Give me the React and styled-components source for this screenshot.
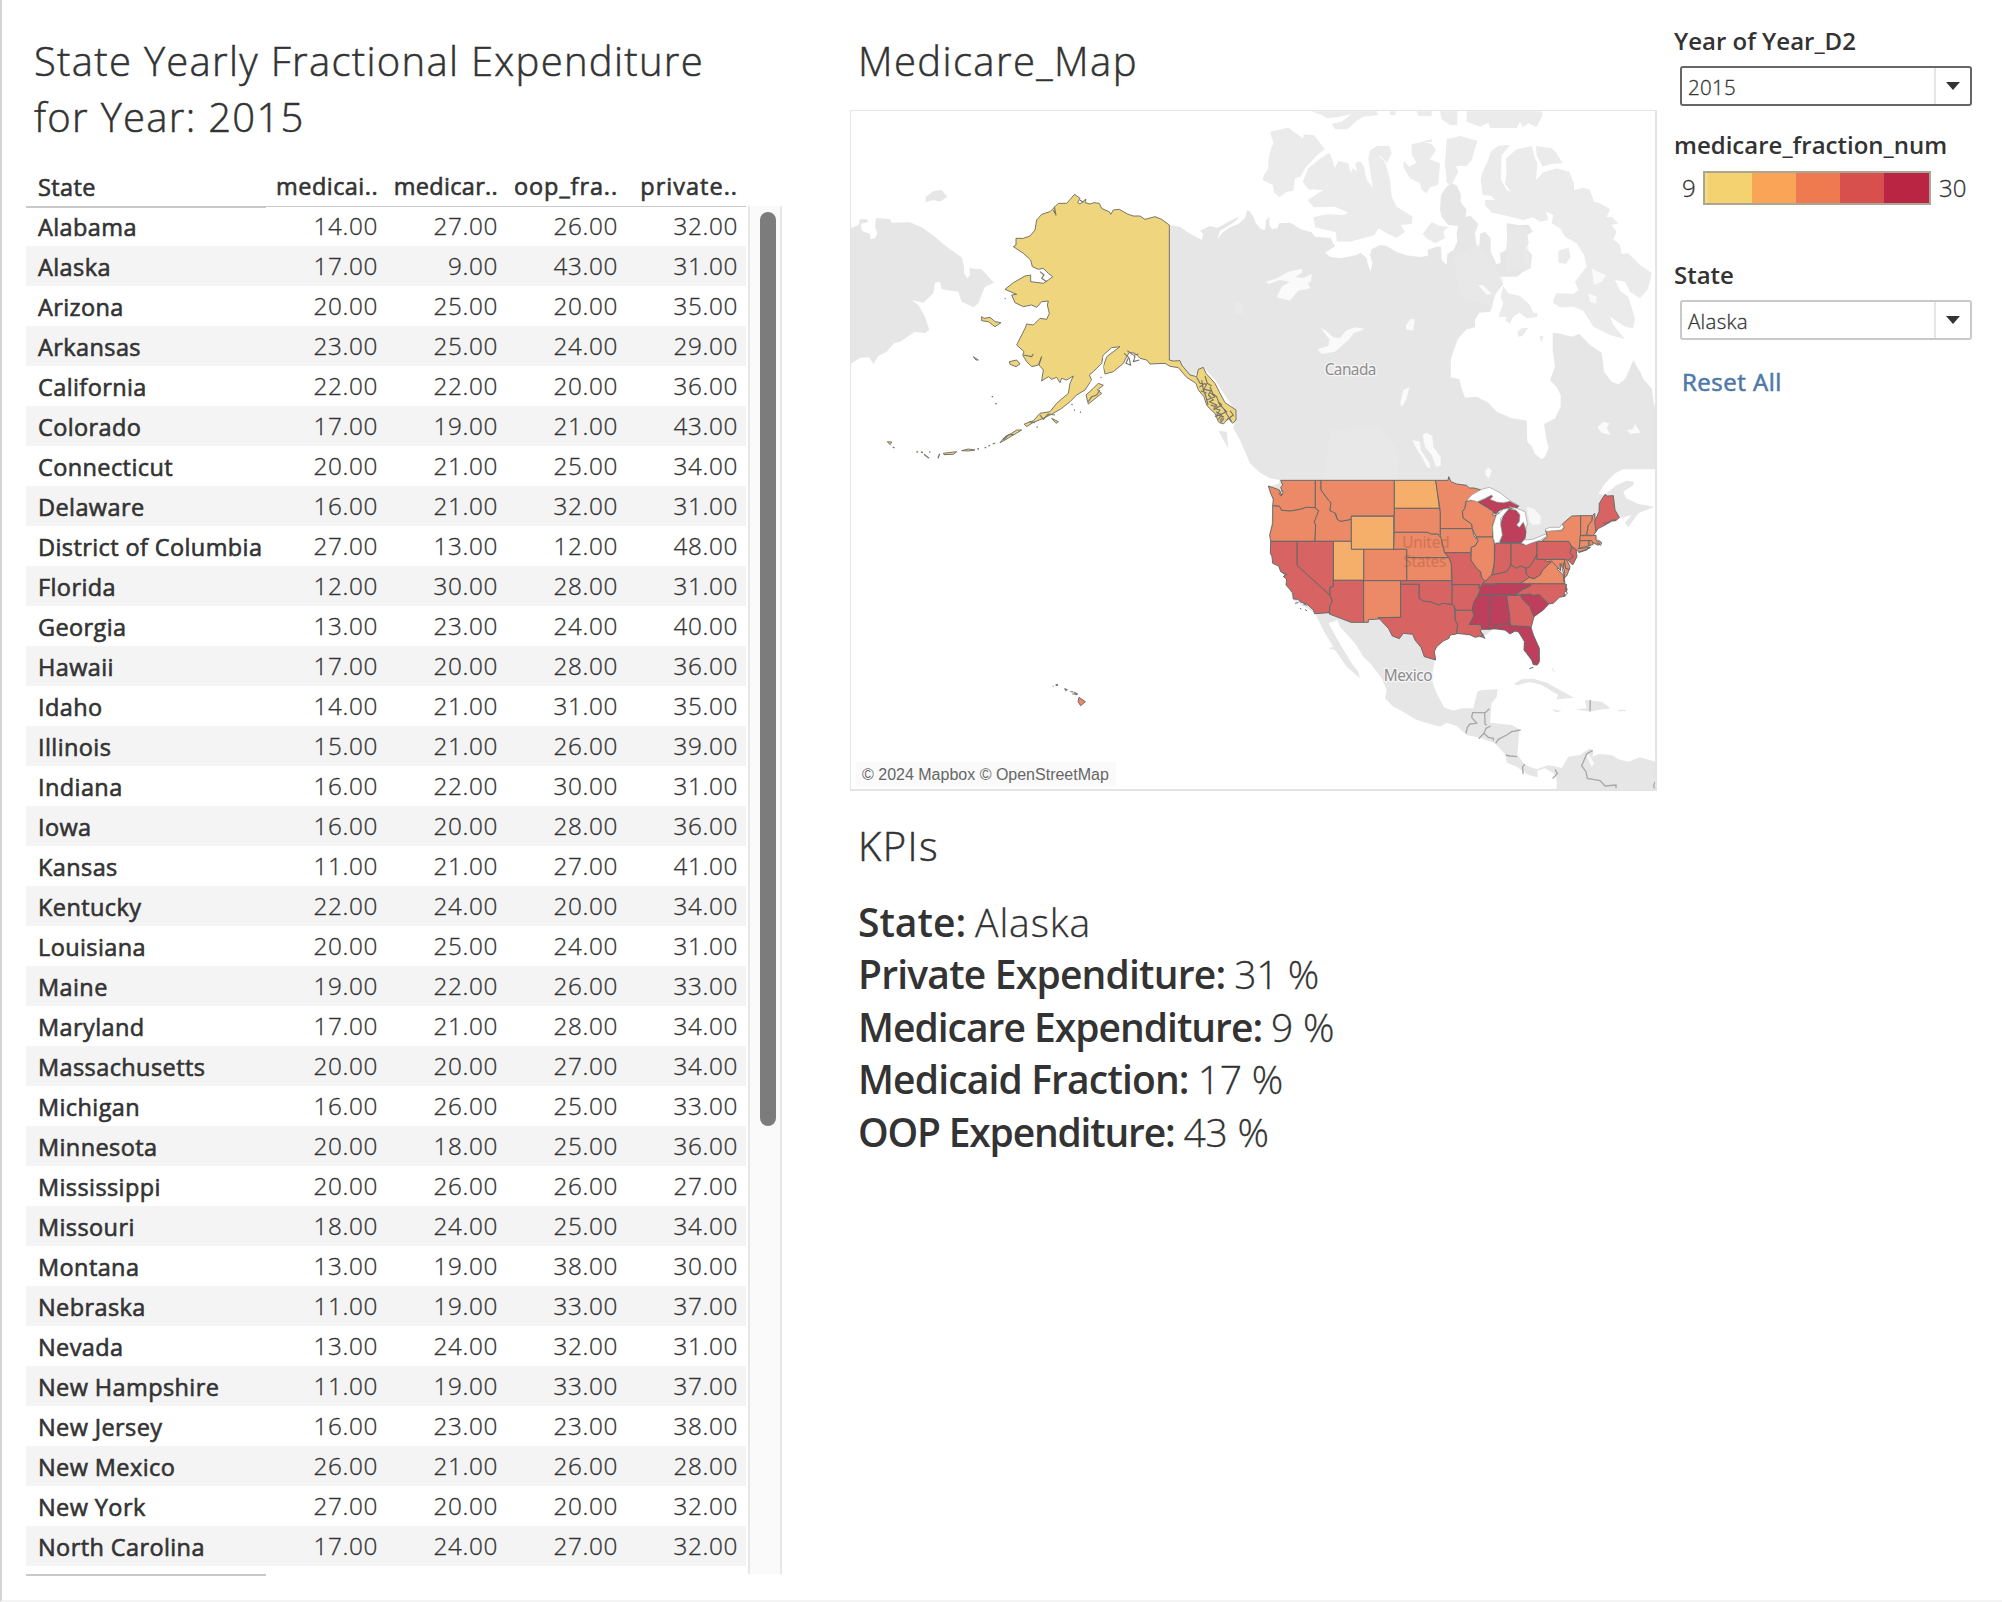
import React from "react";
import styled, { createGlobalStyle } from "styled-components";

const GlobalStyle = createGlobalStyle`
  * { box-sizing: border-box; }
  body { margin: 0; background: #fff; color: #333; font-family: "Open Sans", "Noto Sans", sans-serif; }
`;

const Dashboard = styled.main`
  display: flex;
  width: 2002px;
  height: 1602px;
  overflow: hidden;
  border-left: 2px solid #d4d4d4;
  border-bottom: 2px solid #f4f4f4;
`;

const TablePanel = styled.section`
  width: 848px;
  padding: 33px 0 0 24px;
`;

const SheetTitle = styled.h1`
  margin: 0;
  padding-left: ${(p) => p.$inset || 0}px;
  font-size: 40px;
  line-height: 56px;
  font-weight: 300;
  letter-spacing: ${(p) => p.$spacing || 0}px;
  white-space: nowrap;
  -webkit-text-stroke: 0.5px #333;
`;

const TableBody = styled.div`
  display: flex;
  align-items: flex-start;
  margin-top: 21px;
`;

const Table = styled.div`
  width: 720px;
`;

const Row = styled.div`
  display: grid;
  grid-template-columns: 240px repeat(4, 120px);
  height: 40px;
  line-height: 40px;
  font-size: 24.3px;
  background: ${(p) => (p.$striped ? "#f4f4f4" : "transparent")};
`;

const StateCell = styled.div`
  padding: 1px 0 0 12px;
  font-size: 23.5px;
  font-weight: 400;
  white-space: nowrap;
  letter-spacing: 0.4px;
  -webkit-text-stroke: 0.6px #333;
`;

const ValueCell = styled.div`
  padding-right: 8px;
  text-align: right;
  font-weight: 300;
  letter-spacing: 0.65px;
  -webkit-text-stroke: 0.3px #333;
`;

const ColumnHead = styled.div`
  padding-right: 8px;
  text-align: right;
  font-size: 23.5px;
  font-weight: 400;
  white-space: nowrap;
  letter-spacing: ${(p) => p.$spacing}px;
  -webkit-text-stroke: 0.6px #333;
`;

const HeadRule = styled.div`
  display: grid;
  grid-template-columns: 240px 480px;
  align-items: start;
  height: 2px;
  margin-bottom: -2px;
`;

const Rule = styled.div`
  width: ${(p) => p.$width}px;
  height: ${(p) => p.$thick}px;
  background: #c9c9c9;
`;

const Rows = styled.div`
  padding-bottom: 8px;
`;

const ScrollTrack = styled.div`
  width: 34px;
  height: 1368px;
  margin: 40px 0 0 2px;
  padding: 6px 0 0 10px;
  border: solid #e7e7e7;
  border-width: 0 2px;
  background: #fafafa;
`;

const ScrollThumb = styled.div`
  width: 16px;
  height: 914px;
  border-radius: 8px;
  background: #7c7c7c;
`;

const MapColumn = styled.section`
  width: 807px;
  padding-top: 33px;
`;

const MapFrame = styled.div`
  display: grid;
  height: 681px;
  margin: 21px 0 27px;
  border: solid #e4e4e4;
  border-width: 1px 2px 2px 1px;
`;

const MapCanvas = styled.svg`
  grid-area: 1 / 1;
  display: block;
  width: 804px;
  height: 678px;
`;

const Attribution = styled.div`
  grid-area: 1 / 1;
  align-self: end;
  justify-self: start;
  width: 260px;
  height: 24px;
  margin: 0 0 3px 5px;
  padding-left: 6px;
  background: #fafafa;
  color: #666;
  font: 16px/26px "Liberation Sans", Arial, sans-serif;
  white-space: nowrap;
`;

const KpiList = styled.div`
  padding: 22px 0 0 8px;
`;

const Kpi = styled.div`
  height: 52.4px;
  line-height: 52.4px;
  font-size: 39px;
  font-weight: 300;
  white-space: nowrap;
`;

const KpiName = styled.b`
  font-weight: 600;
  letter-spacing: ${(p) => p.$spacing}px;
`;

const KpiValue = styled.span`
  margin-left: 9px;
  letter-spacing: ${(p) => p.$spacing}px;
  -webkit-text-stroke: 0.3px #333;
`;

const Sidebar = styled.aside`
  flex: 1;
  padding: 25px 28px 0 16px;
`;

const Field = styled.div`
  height: ${(p) => p.$height}px;
`;

const Label = styled.div`
  height: 32px;
  line-height: 32px;
  padding-left: 1px;
  font-size: 24px;
  font-weight: 600;
  white-space: nowrap;
`;

const Select = styled.div`
  display: flex;
  width: 292px;
  height: 40px;
  margin: 9px 0 0 7px;
  border: 2px solid ${(p) => (p.$active ? "#666" : "#c9c9c9")};
  border-radius: 3px;
  background: #fff;
`;

const SelectValue = styled.div`
  flex: 1;
  padding-left: 6px;
  border-right: 2px solid #e5e5e5;
  font-size: 20.5px;
  font-weight: 300;
  line-height: 38px;
  letter-spacing: 0.3px;
  -webkit-text-stroke: 0.3px #333;
`;

const SelectArrow = styled.div`
  display: grid;
  place-items: center;
  width: 34px;
  svg { display: block; width: 14px; height: 8px; }
`;

const Legend = styled.div`
  display: flex;
  align-items: center;
  height: 34px;
  margin: 10px 0 0 9px;
  font-size: 24px;
  font-weight: 300;
  -webkit-text-stroke: 0.3px #333;
`;

const LegendEnd = styled.span`
  width: ${(p) => p.$width}px;
  line-height: 36px;
  padding-left: ${(p) => p.$pad || 0}px;
`;

const LegendBar = styled.div`
  display: flex;
  width: 228px;
  height: 34px;
  border: 2px solid #a9a696;
`;

const Swatch = styled.div`
  width: ${(p) => p.$width}px;
  background: ${(p) => p.$color};
`;

const ResetLink = styled.a`
  display: block;
  padding-left: 9px;
  line-height: 32px;
  font-size: 24px;
  font-weight: 400;
  letter-spacing: 0.5px;
  color: #4e79a7;
  -webkit-text-stroke: 0.6px #4e79a7;
`;

const DATA = `Alabama 14 27 26 32
Alaska 17 9 43 31
Arizona 20 25 20 35
Arkansas 23 25 24 29
California 22 22 20 36
Colorado 17 19 21 43
Connecticut 20 21 25 34
Delaware 16 21 32 31
District of Columbia 27 13 12 48
Florida 12 30 28 31
Georgia 13 23 24 40
Hawaii 17 20 28 36
Idaho 14 21 31 35
Illinois 15 21 26 39
Indiana 16 22 30 31
Iowa 16 20 28 36
Kansas 11 21 27 41
Kentucky 22 24 20 34
Louisiana 20 25 24 31
Maine 19 22 26 33
Maryland 17 21 28 34
Massachusetts 20 20 27 34
Michigan 16 26 25 33
Minnesota 20 18 25 36
Mississippi 20 26 26 27
Missouri 18 24 25 34
Montana 13 19 38 30
Nebraska 11 19 33 37
Nevada 13 24 32 31
New Hampshire 11 19 33 37
New Jersey 16 23 23 38
New Mexico 26 21 26 28
New York 27 20 20 32
North Carolina 17 24 27 32`
  .split("\n")
  .map((line) => {
    const parts = line.split(" ");
    return { state: parts.slice(0, -4).join(" "), values: parts.slice(-4) };
  });

const HEADS = [
  ["medicai..", 0.45],
  ["medicar..", 0.3],
  ["oop_fra..", 0.9],
  ["private..", 1],
];

const KPIS = [
  ["State:", "Alaska", 0, 0.9],
  ["Private Expenditure:", "31 %", -0.8, -0.4],
  ["Medicare Expenditure:", "9 %", -1, -0.2],
  ["Medicaid Fraction:", "17 %", -0.85, -0.2],
  ["OOP Expenditure:", "43 %", -1.2, -0.2],
];

const FILL = { y: "#f0d57f", l: "#f6af6b", o: "#ec8966", r: "#d76463", d: "#be3f5c" };

const MAINLAND =
  "-212,375 -180,380 -155,398 -115,420 -110,402 -120,392 -90,378 -70,383 -50,375 -35,365 -5,350 -8,358 -25,372 -60,392 -68,418 -55,400 -30,382 -5,372 15,355 22,330 30,335 40,350 47,368 60,385 70,390 76,388 78,360 88,350 88,375 96,388 112,385 118,370 150,368 162,374 182,388 215,397 225,410 272,414 280,430 286,438 255,458 270,470 300,475 350,465 362,458 380,475 384,495 392,515 397,490 390,465 395,448 420,435 440,438 470,456 500,466 540,471 565,467 562,450 590,440 603,440 605,480 620,494 622,462 640,450 652,425 650,398 655,378 625,375 605,350 600,330 603,285 618,262 632,250 650,256 662,282 662,305 680,330 676,350 692,348 715,372 705,400 710,440 718,438 720,402 735,395 752,415 752,455 770,493 782,488 780,460 798,450 802,420 800,370 840,376 866,374 878,395 862,405 866,430 858,445 876,465 872,505 850,515 830,530 790,530 778,532 790,552 765,582 755,625 750,636 718,638 705,660 705,682 680,688 655,715 645,740 633,775 632,832 658,838 664,862 675,893 710,890 745,908 770,935 815,955 860,962 862,1025 875,1038 885,1062 905,1078 915,1070 926,1045 918,1010 912,972 945,955 962,920 962,885 950,862 930,840 945,800 938,750 938,698 955,700 995,710 1018,702 1050,735 1085,758 1092,815 1115,845 1135,853 1155,838 1168,810 1180,780 1200,815 1212,840 1235,865 1240,900 1246,925 1246,1108 1150,1108 1125,1120 1095,1150 1075,1182 1095,1184 1130,1155 1160,1142 1182,1145 1180,1155 1150,1175 1158,1195 1195,1212 1243,1220 1195,1240 1165,1282 1155,1268 1175,1245 1140,1255 1065,1295 1080,1330 1010,1355 975,1420 980,1475 880,1550 875,1580 900,1660 885,1695 850,1650 845,1600 760,1588 725,1615 640,1600 585,1630 583,1688 575,1730 580,1755 590,1780 612,1822 640,1832 665,1825 700,1825 712,1775 725,1770 773,1768 770,1790 755,1810 750,1868 815,1875 838,1888 835,1930 832,1965 855,1995 890,2008 925,1995 950,2000 965,2005 985,1970 1020,1965 1050,1945 1060,1955 1058,1970 1075,1962 1115,1965 1135,1978 1165,1985 1200,1972 1246,1985 1246,2067 950,2067 950,2035 940,2020 915,2005 892,2012 893,2032 865,2025 830,2000 800,1988 797,1965 765,1930 720,1913 680,1905 650,1878 620,1868 600,1880 530,1860 480,1830 460,1820 435,1795 440,1770 425,1735 395,1695 370,1670 345,1630 300,1580 292,1560 265,1570 285,1605 305,1640 335,1690 355,1715 360,1735 320,1700 285,1650 265,1645 280,1640 255,1600 230,1550 225,1540 160,1500 135,1430 95,1360 90,1300 100,1210 85,1160 118,1150 118,1140 90,1135 60,1118 30,1090 0,1020 -20,985 -10,940 -75,840 -110,800 -140,830 -212,780";

const ARCTIC = [
  "90,95 145,83 165,98 190,115 190,103 222,106 255,148 232,165 195,205 182,230 165,235 160,272 140,275 118,292 103,278 98,255 68,240 72,225 85,205 85,180 92,150 100,130",
  "268,158 275,175 285,205 295,182 325,190 332,220 338,205 352,215 345,190 360,183 372,200 380,240 398,262 385,175 390,150 405,160 430,180 438,195 450,240 455,290 470,320 518,350 515,372 482,375 495,395 470,414 440,400 415,385 403,405 380,412 330,425 290,425 288,397 225,382 220,352 260,343 310,345 325,338 285,320 222,322 203,300 250,270 205,268 188,245 205,205 235,180",
  "392,150 412,138 448,138 455,160 440,190 425,170 405,165",
  "515,133 550,125 575,132 588,150 570,178 600,190 595,255 570,262 560,280 545,270 540,250 510,235 490,200 492,182 508,200 530,188 515,165",
  "620,118 660,108 712,122 695,180 680,197 648,198 655,215 632,260 620,245 615,190",
  "745,180 752,155 775,137 810,135 785,165 783,240 800,270 814,275 795,252 800,220 798,175 830,148 875,138 885,175 892,190 888,240 910,217 950,205 988,215 1002,250 1002,270 1030,263 1050,270 1062,305 1080,310 1110,328 1100,352 1115,350 1135,370 1115,375 1130,395 1120,418 1140,435 1145,462 1165,460 1200,495 1235,518 1230,545 1222,570 1200,595 1170,575 1155,545 1125,540 1140,572 1165,590 1185,655 1180,685 1155,680 1110,650 1120,675 1155,718 1110,705 1060,680 1030,632 1000,620 960,622 938,608 948,580 1000,582 1015,570 1005,545 1040,500 1032,465 1010,430 975,410 960,385 935,370 940,345 918,335 925,360 900,365 878,352 850,360 790,345 755,338 735,315 735,300 765,300 755,288 728,285 722,240 728,215",
  "888,138 935,145 950,160 968,190 932,192 908,200 890,165",
  "790,558 805,580 840,588 870,615 880,638 893,640 890,652 860,655 838,638 820,650 810,670 795,662 800,652 775,650 790,610 782,590",
  "955,452 985,443 992,470 978,492 955,488",
  "832,695 845,685 865,683 848,708 835,710",
  "898,708 910,708 905,730",
  "548,402 575,366 600,378 625,380 610,395 615,415 585,430 560,415",
  "215,34 410,34 415,45 370,50 350,62 322,88 285,88 275,72 305,65 335,42 300,50 260,55 245,45",
  "680,34 905,34 908,45 890,80 865,70 848,82 840,65 830,84 750,84 745,68 720,80 680,65",
  "600,34 652,34 652,75 630,75 605,58",
  "530,34 575,34 575,48 535,48",
  "450,34 468,34 465,46 450,44",
  "545,125 575,117 575,126",
];

const SIBERIA = [
  "-1168,385 -1145,375 -1140,358 -1120,357 -1115,365 -1137,372 -1135,392 -1110,402 -1108,418 -1095,415 -1088,400 -1095,378 -1092,354 -1050,358 -1045,368 -990,367 -950,385 -910,415 -880,440 -835,472 -828,500 -828,520 -818,535 -810,525 -812,505 -775,508 -738,548 -765,560 -778,592 -785,610 -800,622 -835,605 -845,575 -895,568 -900,545 -915,548 -920,580 -950,608 -985,600 -965,615 -945,650 -932,690 -945,700 -975,695 -1020,725 -1038,730 -1060,755 -1085,768 -1100,792 -1112,772 -1140,773 -1168,792",
  "-943,292 -920,273 -895,270 -878,290 -900,305 -920,300 -943,307",
];

const CARIBBEAN = [
  "822,1752 845,1738 880,1736 920,1748 960,1770 1002,1793 948,1798 955,1785 930,1770 905,1755 870,1746 830,1756",
  "1035,1800 1085,1805 1112,1825 1075,1830 1050,1835 1005,1828 1040,1825",
  "935,1828 965,1832 950,1837",
  "1135,1829 1158,1830 1155,1834 1135,1834",
  "935,1700 945,1716 938,1712",
  "-65,992 -40,995 -35,1045 -50,1020",
];

const LAKES = [
  "78,545 110,535 145,515 185,506 188,516 165,532 190,534 215,522 213,545 203,550 212,565 175,572 150,602 110,592 125,560 150,545 120,540 85,552",
  "242,685 258,692 280,712 300,714 318,692 345,682 374,686 362,692 342,698 328,718 305,738 285,755 245,762 232,748 265,738 268,718",
  "548,1005 560,998 577,1008 580,1040 602,1072 602,1098 588,1100 575,1065 555,1042",
  "517,1020 540,1025 542,1050 568,1088 572,1105 560,1100 545,1070 530,1048",
  "498,675 512,657 524,658 520,692 498,688",
  "480,912 490,870 508,862 500,895 487,920",
  "715,556 728,555 756,582 740,584",
  "1072,982 1090,965 1108,970 1100,985 1112,1005 1085,998",
  "1162,990 1178,988 1185,972 1202,998 1170,1002",
  "735,1112 745,1102 755,1112 748,1135 738,1128",
  "1055,505 1080,518 1098,525 1085,545 1062,555",
  "1045,580 1070,590 1068,612 1050,605",
  "1040,1968 1045,1962 1063,1990 1055,2002",
];

const STATES = [
  ["o", "92,61 196,61 196,143 170,142 150,148 122,153 112,152 95,151 88,139 68,137 70,118 62,100 55,78 78,86 88,90 94,104 99,98 95,90 92,82 98,75"],
  ["o", "68,137 88,139 95,151 122,153 150,148 170,142 194,143 206,152 200,172 193,185 197,195 195,244 62,244 59,225 68,190"],
  ["o", "196,61 213,61 213,90 235,120 243,128 240,152 252,153 262,178 272,184 304,178 304,244 195,244 197,195 193,185 206,152 196,143"],
  ["o", "213,61 433,61 433,168 304,168 304,178 272,184 262,178 257,160 240,152 243,128 235,120 213,90"],
  ["l", "304,169 431,169 431,268 304,268"],
  ["l", "433,61 557,61 562,95 568,145 433,145"],
  ["o", "433,145 568,145 571,155 571,226 562,222 545,223 532,217 433,217"],
  ["o", "433,217 532,217 545,223 562,222 575,236 580,262 584,278 597,293 470,293 470,268 431,268"],
  ["o", "470,293 597,293 604,312 604,362 470,362"],
  ["o", "341,268 470,268 470,362 341,362"],
  ["l", "250,244 304,244 304,268 341,268 341,361 250,361"],
  ["r", "141,244 250,244 250,380 240,382 240,406 141,316"],
  ["r", "62,244 141,244 141,316 240,406 247,423 240,438 238,458 194,461 190,450 172,433 150,425 145,418 130,417 128,398 108,375 110,357 100,350 108,342 92,335 86,318 68,310 66,290 61,280"],
  ["r", "250,361 341,361 341,487 303,487 238,462 240,438 247,423 240,406 240,382 250,380"],
  ["o", "341,362 452,362 452,472 385,473 387,477 355,479 355,487 341,487"],
  ["r", "452,362 604,362 607,402 606,434 580,430 565,435 540,425 522,424 507,415 507,373 452,373"],
  ["r", "452,373 507,373 507,415 522,424 540,425 565,435 580,430 606,434 613,442 616,480 623,495 620,522 600,525 597,535 580,543 560,560 553,575 557,600 523,590 513,562 495,540 488,523 460,520 448,536 427,528 415,505 385,473 452,472"],
  ["o", "557,61 594,61 596,50 603,65 620,72 650,76 658,84 672,84 694,90 665,110 648,125 645,145 637,155 640,175 665,192 667,206 571,206 571,155 562,95"],
  ["o", "571,206 667,206 672,228 685,242 675,258 664,262 662,280 584,278 580,262 571,226"],
  ["r", "584,278 659,278 665,290 663,300 680,325 692,335 695,352 704,362 698,374 690,385 686,385 688,374 607,374 604,312 597,293"],
  ["r", "607,374 688,374 686,385 695,386 680,410 668,440 667,451 616,451 613,437 606,434"],
  ["r", "616,451 667,451 672,468 658,493 692,494 697,508 690,512 705,535 690,528 675,532 660,524 620,520 623,495 616,480"],
  ["o", "648,125 658,122 680,122 700,135 732,150 728,165 738,168 728,195 728,231 679,231 667,206 665,192 640,175 637,155 645,145"],
  ["o", "679,231 728,231 733,250 733,310 725,345 712,362 704,362 695,352 692,335 680,325 663,300 664,262 675,258 685,242"],
  ["d", "683,125 705,118 725,105 728,110 720,118 740,126 760,128 780,124 795,132 806,138 800,145 770,145 750,150 735,162 728,153 700,135"],
  ["d", "765,160 775,148 800,152 810,165 808,185 800,195 808,202 820,186 828,215 825,235 815,248 750,248 757,225 752,195 758,175"],
  ["r", "735,250 783,250 783,315 770,335 750,340 735,343 728,345 733,310"],
  ["r", "783,250 808,250 828,255 842,250 861,244 861,282 850,305 838,322 828,325 812,318 800,325 783,315"],
  ["r", "697,372 725,345 750,340 770,335 783,315 800,325 812,318 828,325 828,340 838,352 812,370 735,371"],
  ["d", "694,376 697,372 735,374 735,371 842,371 842,378 820,388 795,405 685,406"],
  ["d", "685,406 721,407 718,508 697,508 692,494 658,493 672,468 667,445 672,425"],
  ["d", "721,407 770,407 778,460 780,492 733,494 737,506 718,508"],
  ["r", "770,407 812,406 818,418 840,440 852,470 848,485 843,503 838,500 782,498 778,460"],
  ["d", "733,494 780,492 782,498 838,500 843,503 850,525 868,565 868,605 862,615 850,614 845,600 830,580 822,570 824,545 805,515 795,513 780,522 765,510 733,506"],
  ["d", "812,406 840,402 850,406 868,404 896,432 880,450 852,470 840,440 818,418"],
  ["r", "842,371 945,371 952,390 942,398 946,408 928,412 910,430 896,432 868,404 850,406 840,402 795,405 820,388 842,378"],
  ["o", "812,370 838,352 852,356 870,345 878,330 890,318 905,300 925,318 922,328 940,345 945,371 830,371"],
  ["r", "861,282 861,298 882,298 900,300 905,305 890,318 878,330 870,345 852,356 838,352 828,340 828,325 838,322 850,305"],
  ["o", "882,298 943,298 947,325 958,328 950,348 940,356 944,330 935,318 930,310 932,332 920,320 905,303 890,305"],
  ["o", "943,298 950,300 960,320 958,328 947,325"],
  ["r", "861,244 956,244 966,262 960,278 970,290 955,300 943,298 861,298"],
  ["r", "966,260 978,268 981,290 968,315 955,302 970,290 960,278"],
  ["o", "875,244 892,230 887,212 935,212 942,202 937,192 965,168 992,167 992,225 988,262 984,266 1020,262 1010,270 988,277 978,268 966,260 956,244"],
  ["o", "992,167 1027,167 1026,182 1015,195 1010,225 992,227"],
  ["o", "1027,167 1034,160 1038,215 1028,227 1010,225 1015,195 1026,182"],
  ["r", "1034,185 1047,155 1048,130 1065,103 1072,108 1090,107 1095,150 1108,172 1098,182 1085,183 1065,195 1045,205 1038,215"],
  ["o", "990,227 1028,227 1038,226 1038,240 1052,248 1045,256 1030,248 1020,242 990,242"],
  ["o", "990,242 1017,242 1017,258 988,264"],
  ["o", "1017,242 1025,242 1030,252 1017,258"],
];

const GREAT_LAKES = [
  "650,122 665,105 695,88 718,82 750,98 780,122 808,138 795,132 780,124 760,128 740,126 720,118 728,110 725,105 683,125 662,120",
  "738,168 760,148 778,145 765,160 752,175 752,195 757,225 748,245 735,250 730,235 728,200",
  "778,140 800,145 825,155 832,190 828,208 820,186 808,202 800,195 808,185 810,165 800,152",
  "815,248 822,240 848,238 887,222 890,228 872,240 842,250 828,256",
  "885,208 900,202 930,202 935,192 941,200 935,210 890,214",
];

const ALASKA = [
  "704,283 720,295 713,308 720,312 738,297 735,308 750,312 762,308 778,310 785,325 795,330 808,335 812,343 820,330 838,328 862,342 880,348 900,348 915,358 945,350 965,358 988,375 988,780 1000,783 1020,782 1025,795 1050,825 1070,830 1075,808 1090,802 1098,820 1125,850 1140,880 1155,908 1188,930 1188,960 1178,970 1165,955 1150,972 1135,965 1125,940 1108,925 1100,915 1092,890 1075,870 1068,850 1040,832 1015,803 990,799 975,790 930,792 920,780 900,775 885,760 868,757 860,770 850,790 820,815 795,822 790,800 800,770 820,755 840,740 815,743 790,765 785,790 760,815 748,825 755,840 735,870 710,885 690,905 665,925 640,940 610,955 580,967 560,980 553,972 580,962 600,940 630,935 650,910 685,880 690,850 700,828 680,840 665,835 660,848 650,832 635,838 625,830 605,843 610,810 597,795 605,770 595,795 575,800 560,785 548,765 552,755 530,735 540,715 555,685 560,672 580,675 600,655 620,658 628,640 622,615 625,603 605,605 590,622 575,615 550,620 525,608 515,585 530,583 495,568 520,548 555,528 572,525 572,545 610,550 625,540 638,530 625,520 610,505 595,508 577,500 572,480 550,460 520,440 528,435 528,415 550,415 570,408 585,390 590,360 605,343 630,335 655,310 680,310",
  "425,650 432,655 450,652 465,665 483,668 465,680 445,665 425,662",
  "508,785 530,780 540,792 528,800 510,793",
  "738,885 760,865 775,850 790,856 772,870 785,880 760,900 745,912",
  "400,770 415,780 408,780",
  "480,1028 495,1010 515,1000 530,990 545,990 515,1008 495,1020",
  "142,1025 155,1026 150,1034",
  "310,1060 350,1055 340,1063 312,1064",
  "365,1052 385,1047 405,1050 385,1053",
  "635,955 655,965 648,970",
];

const PANHANDLE_CHANNELS =
  "M1070 832L1080 850L1100 852L1092 868L1112 872L1105 885L1120 900L1108 905L1130 915L1122 925L1140 930L1130 945L1150 950L1140 962M1085 840L1090 870L1098 890L1104 915M1110 860L1118 880L1130 890L1138 912L1150 925L1162 945L1175 965M1078 862L1092 852M1100 900L1125 890L1110 878M1120 930L1145 915L1135 905M1125 950L1160 935L1150 925M1160 960L1180 945L1170 932M1140 970L1152 955M1095 828L1102 850L1115 858M1082 872L1100 880M1112 915L1135 922M1128 935L1145 945L1135 958M852 760L866 772L858 790L872 796L868 775L885 770L880 785L898 780M862 752L880 766L895 762M640 330L648 345L643 320M720 300L730 308M600 515L612 525L605 535L620 545M745 905L755 890L770 885L780 870M600 945L610 958L625 942L645 945M490 1020L505 1005L520 1003M568 965L585 968M550 765L575 770L580 762";

const SPECKS =
  "M455 891l4 -2M466 910l4 3M494 596l3 0M230 1058l3 -5M243 1056l6 2M252 1063l15 12M268 1055l3 2M294 1075l5 -14M412 1046l5 1M434 1043l5 0M445 1038l5 -2M458 1032l8 -3M590 980l3 2M702 930l3 1M720 936l3 1M158 1041l6 3M694 913l4 1M782 831l2 2";

const BORDERS =
  "M678 1900L682 1882L690 1872L710 1870L695 1852L698 1838L736 1838L748 1826M734 1838L735 1872L740 1876M716 1916L732 1900L738 1885L752 1878M732 1900L745 1912L760 1915L760 1922M767 1930L775 1918L800 1905L815 1895L842 1890M797 1965L810 1968L832 1970M855 1993L848 2000L849 2022M945 2008L952 2020L938 2036M1058 1951L1040 1962L1025 1998L1038 2015L1042 2035L1080 2042L1095 2058L1128 2055L1128 2065M1246 2045L1241 2055L1243 2066M1051 1800L1050 1834";

const Poly = ({ list, ...rest }) => list.map((points, i) => <polygon key={i} points={points} {...rest} />);

function MedicareMap() {
  return (
    <MapCanvas viewBox="-1167 33 2412 2034">
      <polygon points={MAINLAND} fill="#e6e6e6" />
      <Poly list={ARCTIC} fill="#ebebeb" />
      <Poly list={SIBERIA} fill="#e6e6e6" />
      <Poly list={CARIBBEAN} fill="#e6e6e6" />
      <g fill="#ebebeb" opacity="0.5">
        <polygon points="640,470 720,430 790,540 750,620 660,590" />
        <polygon points="805,380 860,380 870,500 800,520" />
      </g>
      <polygon points="270,990 420,980 480,1060 470,1140 250,1140" fill="#e8e8e8" />
      <Poly list={LAKES} fill="#fafafa" />
      <polygon points="-18,605 5,607 12,640 -15,642" fill="#e9e9e9" />
      <path d={BORDERS} fill="none" stroke="#a8a8a8" strokeWidth="4" />

      <g fontSize="46" fill="#8c8c8c" stroke="#f4f4f4" strokeWidth="8" strokeLinejoin="round" paintOrder="stroke" fontFamily="Noto Sans">
        <text x="254" y="825" letterSpacing="-1.6">Canada</text>
        <text x="431" y="1742" letterSpacing="-1.2">Mexico</text>
      </g>

      <g transform="translate(30 1080)">
        <polygon points="830,140 850,145 872,168 872,192 850,195 838,185" fill="#f7f7f7" />
        <g stroke="#5f6866" strokeWidth="2.8" strokeLinejoin="round">
          {STATES.map(([tone, points], i) => (
            <polygon key={i} points={points} fill={FILL[tone]} />
          ))}
        </g>
        <Poly list={GREAT_LAKES} fill="#fff" stroke="#9a9a9a" strokeWidth="2" />
        <path
          d="M96 92L88 100L92 108L99 102M98 340L112 345M135 430L145 428M160 432L172 436M165 448l6 5M150 445l4 2M942 306L938 330L944 350L940 366M950 372L946 388L952 400L940 410M936 310L930 330M838 626L850 622M985 277L1005 270L1022 262M1040 248L1052 256L1055 248L1045 240M1060 190L1075 188L1085 180L1098 180M690 512L700 525L690 530M735 168L742 158L748 160"
          fill="none" stroke="#6a6a6a" strokeWidth="3"
        />
        <g fontSize="46" fill="#a0503c" opacity="0.38" fontFamily="Noto Sans">
          <text x="457" y="264" letterSpacing="-0.6">United</text>
          <text x="460" y="320" letterSpacing="-0.6">States</text>
        </g>
      </g>

      <g transform="translate(-1200 0)" strokeLinejoin="round">
        <Poly list={ALASKA} fill={FILL.y} stroke="#6c6c64" strokeWidth="2.8" />
        <path d="M790 768L820 745L800 765L785 800L760 830L745 860L768 838L790 812Z" fill="#fff" />
        <path d={PANHANDLE_CHANNELS} fill="none" stroke="#77756a" strokeWidth="3.4" />
        <path d={SPECKS} fill="none" stroke="#77756a" strokeWidth="4" />
        <circle cx="875" cy="772" r="7" fill="#fff" />
      </g>

      <g transform="translate(-1200 1680)" fill={FILL.o} stroke="#6c6c6c" strokeWidth="3">
        <polygon points="717,112 736,125 722,137 714,125" />
        <path d="M674 86l8 3l-5 3zM647 75l5 -2l1 4zM638 78l3 1M691 95l10 1M697 102l8 0M703 97l10 5l-5 3z" />
      </g>
    </MapCanvas>
  );
}

function Dropdown({ label, value, active }) {
  return (
    <>
      <Label>{label}</Label>
      <Select $active={active}>
        <SelectValue>{value}</SelectValue>
        <SelectArrow>
          <svg viewBox="0 0 14 8"><path d="M0 0H14L7 8Z" fill="#333" /></svg>
        </SelectArrow>
      </Select>
    </>
  );
}

export default function App() {
  return (
    <>
      <GlobalStyle />
      <Dashboard>
        <TablePanel>
          <SheetTitle $inset={8} $spacing={1.3}>
            State Yearly Fractional Expenditure
            <br />
            for Year: 2015
          </SheetTitle>
          <TableBody>
            <Table>
              <Row>
                <StateCell>State</StateCell>
                {HEADS.map(([name, spacing]) => (
                  <ColumnHead key={name} $spacing={spacing}>{name}</ColumnHead>
                ))}
              </Row>
              <HeadRule>
                <Rule $width={240} $thick={2} />
                <Rule $width={480} $thick={1} />
              </HeadRule>
              <Rows>
                {DATA.map(({ state, values }, i) => (
                  <Row key={state} $striped={i % 2 === 1}>
                    <StateCell>{state}</StateCell>
                    {values.map((v, c) => <ValueCell key={c}>{v}.00</ValueCell>)}
                  </Row>
                ))}
              </Rows>
              <Rule $width={240} $thick={2} />
            </Table>
            <ScrollTrack>
              <ScrollThumb />
            </ScrollTrack>
          </TableBody>
        </TablePanel>

        <MapColumn>
          <SheetTitle $inset={8} $spacing={1.4}>Medicare_Map</SheetTitle>
          <MapFrame>
            <MedicareMap />
            <Attribution>© 2024 Mapbox © OpenStreetMap</Attribution>
          </MapFrame>
          <SheetTitle $inset={8} $spacing={1.4}>KPIs</SheetTitle>
          <KpiList>
            {KPIS.map(([name, value, nameSpacing, valueSpacing]) => (
              <Kpi key={name}>
                <KpiName $spacing={nameSpacing}>{name}</KpiName>
                <KpiValue $spacing={valueSpacing}>{value}</KpiValue>
              </Kpi>
            ))}
          </KpiList>
        </MapColumn>

        <Sidebar>
          <Field $height={104}>
            <Dropdown label="Year of Year_D2" value="2015" active />
          </Field>
          <Field $height={130}>
            <Label>medicare_fraction_num</Label>
            <Legend>
              <LegendEnd $width={21}>9</LegendEnd>
              <LegendBar>
                <Swatch $width={3} $color="#f4da86" />
                <Swatch $width={44} $color="#f4d26f" />
                <Swatch $width={44} $color="#faa457" />
                <Swatch $width={44} $color="#ef7a50" />
                <Swatch $width={44} $color="#d8504e" />
                <Swatch $width={45} $color="#b92543" />
              </LegendBar>
              <LegendEnd $width={40} $pad={8}>30</LegendEnd>
            </Legend>
          </Field>
          <Field $height={107}>
            <Dropdown label="State" value="Alaska" />
          </Field>
          <ResetLink>Reset All</ResetLink>
        </Sidebar>
      </Dashboard>
    </>
  );
}
